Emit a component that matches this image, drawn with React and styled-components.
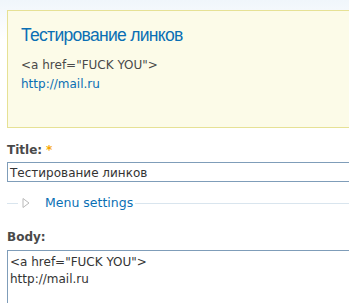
import React from "react";
import styled, { createGlobalStyle } from "styled-components";

const Global = createGlobalStyle`
  html, body { margin: 0; padding: 0; overflow: hidden; background: #fff; }
  body { font-family: "DejaVu Sans", Verdana, sans-serif; font-size: 12px; color: #494949; }
`;

const Page = styled.div`
  width: 349px;
  height: 303px;
  overflow: hidden;
  box-sizing: border-box;
  padding: 10px 0 0 7px;
  background: linear-gradient(#f0f6fb 0px, #ffffff 40px);
`;

const Preview = styled.div`
  width: 360px;
  height: 118px;
  box-sizing: border-box;
  background: #fcfbe8;
  border: 1px solid #e6e195;
  padding: 13px 13px 0;
`;

const NodeTitle = styled.h2`
  margin: 0;
  font-family: "Liberation Sans", Arial, sans-serif;
  font-weight: normal;
  font-size: 17.5px;
  letter-spacing: -0.7px;
  line-height: 22px;
  color: #0a6fb4;
`;

const NodeBody = styled.div`
  margin-top: 10px;
  line-height: 19px;
  color: #494949;
`;

const Link = styled.a`
  color: #0a6fb4;
  text-decoration: none;
`;

const Label = styled.label`
  display: block;
  margin-top: ${(p) => p.$top}px;
  font-weight: bold;
  font-size: 12px;
  line-height: 14px;
  color: #494949;
`;

const Required = styled.span`
  color: #f7a600;
  margin-left: 4px;
`;

const TextInput = styled.div`
  width: 360px;
  height: 20px;
  box-sizing: border-box;
  margin-top: 5px;
  border: 1px solid #7f9db9;
  padding: 0 2px;
  overflow: hidden;
  line-height: 21px;
  color: #333;
  background: #fff;
`;

const Fieldset = styled.fieldset`
  width: 360px;
  box-sizing: border-box;
  margin: 13px 0 0;
  padding: 0;
  border: none;
  border-top: 1px solid #d9e5ee;
  height: 18px;
`;

const Legend = styled.legend`
  margin-left: 11px;
  padding: 0 2px 0 4px;
  display: flex;
  align-items: center;
  font-size: 12.5px;
  line-height: 16px;
`;

const Arrow = styled.svg`
  width: 8px;
  height: 10px;
  margin-right: 15px;
`;

const MenuLink = styled.a`
  color: #0a6fb4;
  text-decoration: none;
`;

const TextArea = styled.div`
  width: 360px;
  height: 80px;
  box-sizing: border-box;
  margin-top: 6px;
  border: 1px solid #7f9db9;
  padding: 3px 2px;
  line-height: 17px;
  color: #333;
  background: #fff;
`;

export default function App() {
  return (
    <>
      <Global />
      <Page>
        <Preview>
          <NodeTitle>Тестирование линков</NodeTitle>
          <NodeBody>
            {'<a href="FUCK YOU">'}
            <br />
            <Link href="#">http://mail.ru</Link>
          </NodeBody>
        </Preview>
        <Label $top={15}>
          Title:<Required>*</Required>
        </Label>
        <TextInput>Тестирование линков</TextInput>
        <Fieldset>
          <Legend>
            <Arrow viewBox="0 0 8 10">
              <path d="M1 0.5 L7 5 L1 9.5 Z" fill="none" stroke="#b9b9b9" strokeWidth="1" />
            </Arrow>
            <MenuLink href="#">Menu settings</MenuLink>
          </Legend>
        </Fieldset>
        <Label $top={17}>Body:</Label>
        <TextArea>
          {'<a href="FUCK YOU">'}
          <br />
          http://mail.ru
        </TextArea>
      </Page>
    </>
  );
}
